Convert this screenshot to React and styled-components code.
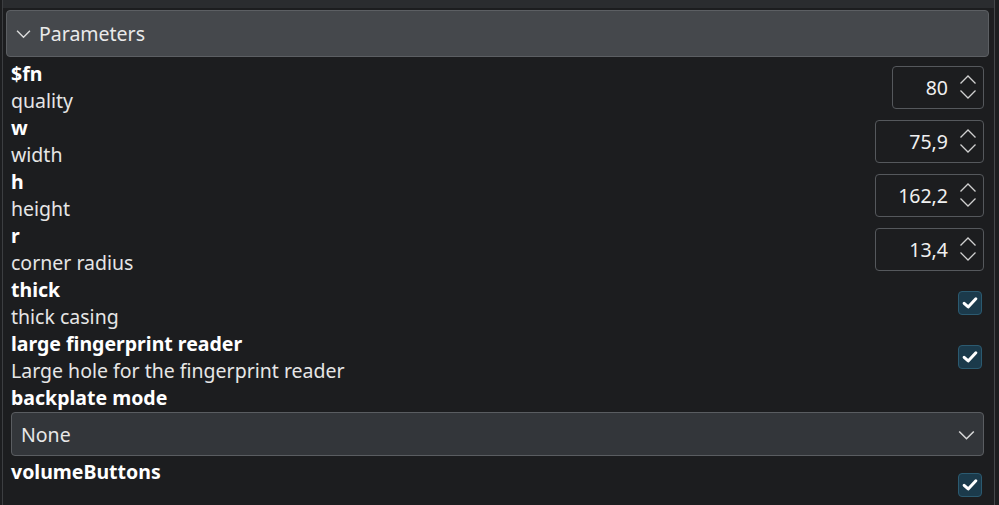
import React from 'react'
import styled, { createGlobalStyle } from 'styled-components'

const GlobalStyle = createGlobalStyle`
    html, body {
        margin: 0;
        padding: 0;
        background: #1c1d1f;
        overflow: hidden;
    }
    body {
        font-family: 'Noto Sans', 'DejaVu Sans', sans-serif;
        color: #f0f0f0;
    }
`

const Frame = styled.div`
    height: 505px;
    width: 993px;
    margin-left: 2px;
    box-sizing: border-box;
    border-left: 1px solid #3c3e41;
    border-right: 1px solid #45484b;
    padding: 10px 5px 0 3px;
    background: linear-gradient(#2a2c2f 0, #2a2c2f 8px, #1c1d1f 8px);
`

const Header = styled.div`
    display: flex;
    align-items: center;
    gap: 8px;
    height: 47px;
    box-sizing: border-box;
    padding: 0 9px;
    background: #45484c;
    border: 1px solid #5c5f63;
    border-radius: 4px;
    font-size: 19.5px;
    color: #eaeaea;
`

const List = styled.div`
    display: flex;
    flex-direction: column;
    padding: 3px 5px 0 5px;
`

const Row = styled.div`
    display: flex;
    align-items: center;
    justify-content: space-between;
    min-height: 54px;
`

const Texts = styled.div`
    display: flex;
    flex-direction: column;
`

const Name = styled.div`
    font-size: 19.5px;
    font-weight: 700;
    line-height: 27px;
    color: #ffffff;
`

const Desc = styled.div`
    font-size: 19.5px;
    line-height: 27px;
    color: #e6e6e6;
`

const Spin = styled.div`
    display: flex;
    align-items: center;
    justify-content: flex-end;
    gap: 10px;
    width: ${p => p.$w}px;
    height: 43px;
    box-sizing: border-box;
    padding: 0 5px 0 8px;
    border: 1px solid #55585c;
    border-radius: 4px;
    background: #1c1d1f;
    font-size: 19.5px;
    color: #f0f0f0;
`

const Arrows = styled.svg`
    width: 20px;
    height: 30px;
`

const Check = styled.div`
    width: 24px;
    height: 24px;
    box-sizing: border-box;
    margin-right: 2px;
    border: 1px solid #2b5a70;
    border-radius: 4px;
    background: #1b3a4b;
    display: flex;
    align-items: center;
    justify-content: center;
`

const Block = styled.div`
    display: flex;
    flex-direction: column;
    padding-bottom: 2px;
`

const Select = styled.div`
    display: flex;
    align-items: center;
    justify-content: space-between;
    height: 44px;
    box-sizing: border-box;
    padding: 0 8px 0 9px;
    margin-top: 1px;
    border: 1px solid #5a5d61;
    border-radius: 4px;
    background: #33363a;
    font-size: 19.5px;
    color: #e8e8e8;
`

const Chevron = ({ size = 14, color = '#d8d8d8' }) => (
    <svg width={size} height={size} viewBox="0 0 14 14">
        <polyline points="1,4.5 7,10.5 13,4.5" fill="none" stroke={color} strokeWidth="1.3" />
    </svg>
)

const SpinBox = ({ value, w }) => (
    <Spin $w={w}>
        <span>{value}</span>
        <Arrows viewBox="0 0 20 30">
            <polyline points="2.5,11.5 10,4 17.5,11.5" fill="none" stroke="#d0d0d0" strokeWidth="1.3" />
            <polyline points="2.5,18.5 10,26 17.5,18.5" fill="none" stroke="#d0d0d0" strokeWidth="1.3" />
        </Arrows>
    </Spin>
)

const CheckBox = () => (
    <Check>
        <svg width="16" height="16" viewBox="0 0 15 15">
            <polyline points="2,7.8 5.8,11.2 13,3.6" fill="none" stroke="#ffffff" strokeWidth="2.8" strokeLinecap="round" strokeLinejoin="round" />
        </svg>
    </Check>
)

const params = [
    { name: '$fn', desc: 'quality', spin: '80', w: 92 },
    { name: 'w', desc: 'width', spin: '75,9', w: 109 },
    { name: 'h', desc: 'height', spin: '162,2', w: 109 },
    { name: 'r', desc: 'corner radius', spin: '13,4', w: 109 },
    { name: 'thick', desc: 'thick casing', check: true },
    { name: 'large fingerprint reader', desc: 'Large hole for the fingerprint reader', check: true },
]

export default function App() {
    return (
        <>
            <GlobalStyle />
            <Frame>
                <Header>
                    <Chevron size={15} color="#dcdcdc" />
                    Parameters
                </Header>
                <List>
                    {params.map(p => (
                        <Row key={p.name}>
                            <Texts>
                                <Name>{p.name}</Name>
                                <Desc>{p.desc}</Desc>
                            </Texts>
                            {p.check ? <CheckBox /> : <SpinBox value={p.spin} w={p.w} />}
                        </Row>
                    ))}
                    <Block>
                        <Name>backplate mode</Name>
                        <Select>
                            None
                            <Chevron size={17} />
                        </Select>
                    </Block>
                    <Row>
                        <Texts>
                            <Name>volumeButtons</Name>
                            <Desc>&nbsp;</Desc>
                        </Texts>
                        <CheckBox />
                    </Row>
                </List>
            </Frame>
        </>
    )
}
